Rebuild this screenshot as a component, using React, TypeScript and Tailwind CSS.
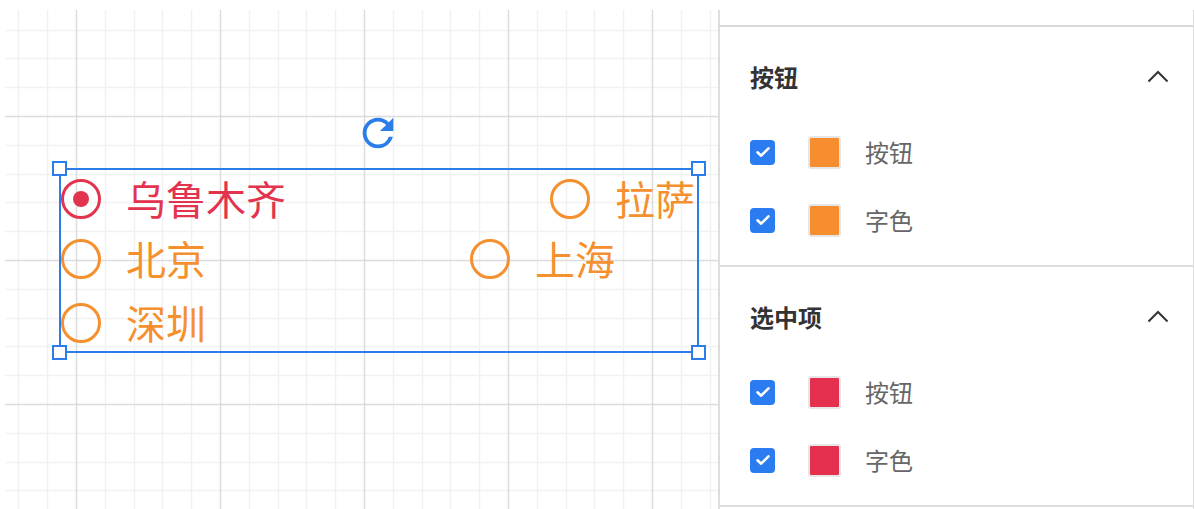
import React from "react";

const FONT = "font-['Noto_Sans_CJK_SC','Noto_Sans',sans-serif]";

function Grid() {
  const W = 713;
  const H = 499;
  const vx: { x: number; major: boolean }[] = [];
  for (let k = 0; ; k++) {
    const x = 13.4 + 28.8 * k;
    if (x > W) break;
    vx.push({ x: Math.round(x), major: (k - 2) % 5 === 0 });
  }
  const hy: { y: number; major: boolean }[] = [];
  for (let k = 0; ; k++) {
    const y = 19.6 + 28.8 * k;
    if (y > H) break;
    hy.push({ y: Math.round(y), major: (k - 3) % 5 === 0 });
  }
  return (
    <svg className="absolute inset-0" width={W} height={H}>
      {vx.filter((l) => !l.major).map((l, i) => (
        <line key={"vm" + i} x1={l.x + 0.5} x2={l.x + 0.5} y1={0} y2={H} stroke="#f1f1f1" strokeWidth={1.5} />
      ))}
      {hy.filter((l) => !l.major).map((l, i) => (
        <line key={"hm" + i} y1={l.y + 0.5} y2={l.y + 0.5} x1={0} x2={W} stroke="#f1f1f1" strokeWidth={1.5} />
      ))}
      {vx.filter((l) => l.major).map((l, i) => (
        <line key={"vM" + i} x1={l.x + 0.5} x2={l.x + 0.5} y1={0} y2={H} stroke="#dcdcdc" strokeWidth={1.5} />
      ))}
      {hy.filter((l) => l.major).map((l, i) => (
        <line key={"hM" + i} y1={l.y + 0.5} y2={l.y + 0.5} x1={0} x2={W} stroke="#dcdcdc" strokeWidth={1.5} />
      ))}
    </svg>
  );
}

function Radio({ label, checked }: { label: string; checked?: boolean }) {
  const color = checked ? "text-[#e2344f]" : "text-[#f5902f]";
  return (
    <div className="flex items-center h-[40px] gap-[25px]">
      <div
        className={
          "w-[40px] h-[40px] rounded-full border-[3px] flex items-center justify-center shrink-0 " +
          (checked ? "border-[#e2344f]" : "border-[#f5902f]")
        }
      >
        {checked && <div className="w-[16px] h-[16px] rounded-full bg-[#e2344f]" />}
      </div>
      <span className={"text-[40px] leading-[40px] whitespace-nowrap -translate-y-[1px] " + color}>{label}</span>
    </div>
  );
}

function Handle({ pos }: { pos: string }) {
  return <div className={"absolute w-[15px] h-[15px] bg-white border-2 border-[#2b7de9] " + pos} />;
}

function Canvas() {
  return (
    <div className="relative w-[713px] h-[499px] shrink-0 overflow-hidden bg-white">
      <Grid />
      <div className="absolute left-[54px] top-[158px] w-[640px] h-[185px] border-2 border-[#2b7de9]">
        <svg
          className="absolute left-[294px] top-[-60px]"
          width={46}
          height={46}
          viewBox="0 0 24 24"
        >
          <path
            fill="#2b7de9"
            d="M17.65 6.35A7.958 7.958 0 0 0 12 4c-4.42 0-7.99 3.58-7.99 8s3.57 8 7.99 8c3.730 0 6.84-2.55 7.73-6h-2.08A5.99 5.99 0 0 1 12 18c-3.31 0-6-2.69-6-6s2.69-6 6-6c1.66 0 3.14.69 4.22 1.78L13 11h7V4l-2.35 2.35z"
          />
        </svg>
        <Handle pos="-left-[9px] -top-[9px]" />
        <Handle pos="-right-[9px] -top-[9px]" />
        <Handle pos="-left-[9px] -bottom-[9px]" />
        <Handle pos="-right-[9px] -bottom-[9px]" />
        <div className={"flex flex-col pt-[9px] " + FONT}>
          <div className="flex gap-[264px]">
            <Radio label="乌鲁木齐" checked />
            <Radio label="拉萨" />
          </div>
          <div className="flex gap-[264px] mt-[20px]">
            <Radio label="北京" />
            <Radio label="上海" />
          </div>
          <div className="flex mt-[24px]">
            <Radio label="深圳" />
          </div>
        </div>
      </div>
    </div>
  );
}

function Check() {
  return (
    <div className="w-[25px] h-[25px] rounded-[4px] bg-[#2a7cf0] flex items-center justify-center shrink-0">
      <svg width="18" height="18" viewBox="0 0 18 18">
        <path d="M3.5 9.3l3.6 3.4L14.5 5.3" fill="none" stroke="white" strokeWidth="2.6" strokeLinecap="round" strokeLinejoin="round" />
      </svg>
    </div>
  );
}

function Row({ color, label, className }: { color: string; label: string; className: string }) {
  return (
    <div className={"flex items-center h-[40px] " + className}>
      <Check />
      <div className="ml-[33px] w-[33px] h-[33px] rounded-[3px] border-2 border-[#e6e6e6] p-0 shrink-0">
        <div className={"w-full h-full rounded-[1px] " + color} />
      </div>
      <span className="ml-[24px] text-[24px] leading-[40px] text-[#666666]">{label}</span>
    </div>
  );
}

function Section({ title, color }: { title: string; color: string }) {
  return (
    <div className="h-[240px] border-b-2 border-[#dddddd] pl-[30px] pr-[24px] pt-[31px]">
      <div className="flex items-center justify-between h-[37px]">
        <span className="text-[24px] font-bold text-[#333333] leading-[37px]">{title}</span>
        <svg width="22" height="13" viewBox="0 0 22 13">
          <path d="M1.5 11.5L11 2l9.5 9.5" fill="none" stroke="#333333" strokeWidth="2" />
        </svg>
      </div>
      <Row color={color} label="按钮" className="mt-[37px]" />
      <Row color={color} label="字色" className="mt-[28px]" />
    </div>
  );
}

export default function App() {
  return (
    <div className={"w-[1194px] h-[509px] bg-white flex pl-[5px] pt-[10px] overflow-hidden " + FONT}>
      <Canvas />
      <div className="flex-1 h-[499px] border-l-2 border-r border-[#dddddd] pt-[15px]">
        <div className="border-t-2 border-[#d9d9d9]">
          <Section title="按钮" color="bg-[#f68e2f]" />
          <Section title="选中项" color="bg-[#e4304e]" />
        </div>
      </div>
    </div>
  );
}
